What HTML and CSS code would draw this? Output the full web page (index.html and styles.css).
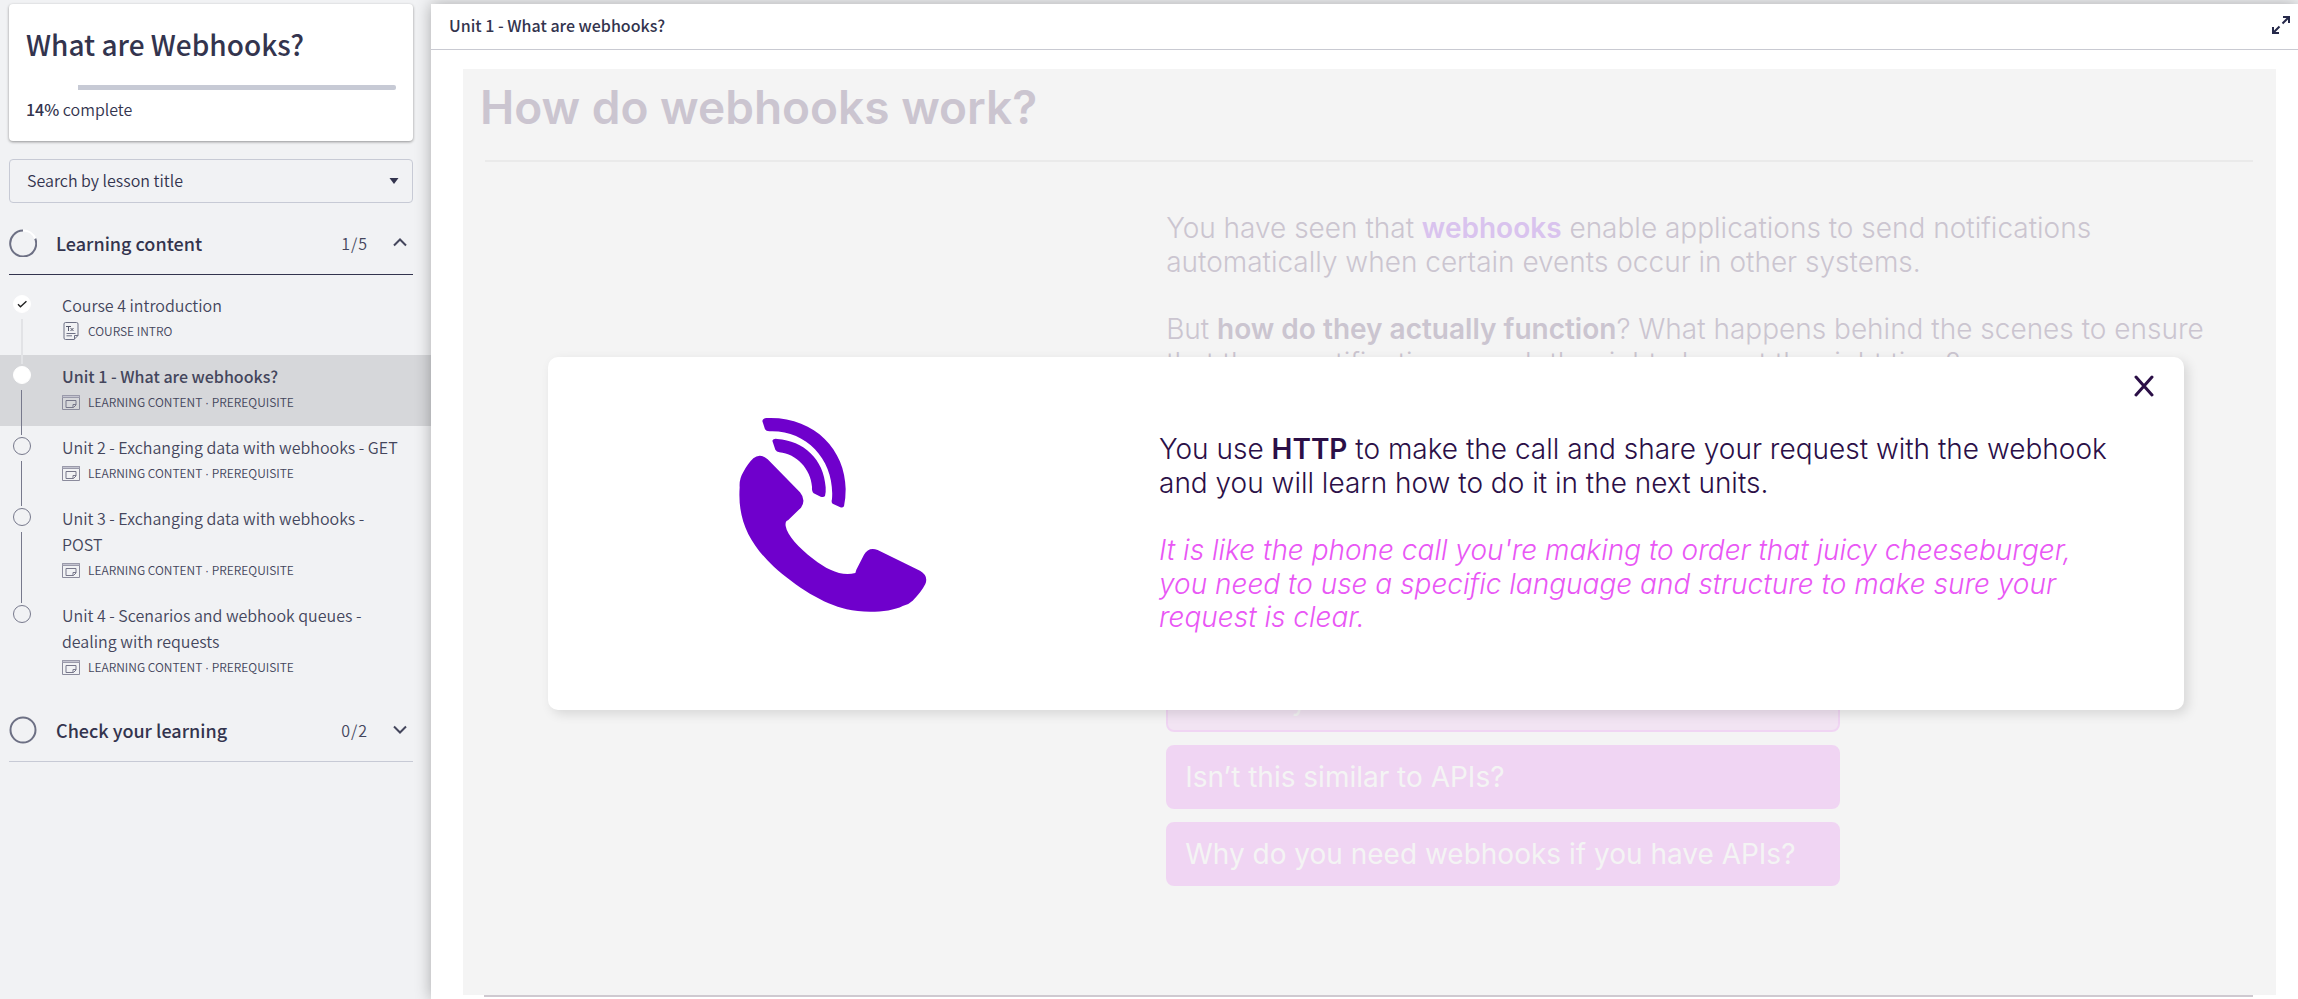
FILE: index.html
```html
<!DOCTYPE html>
<html lang="en">
<head>
<meta charset="utf-8">
<title>What are Webhooks?</title>
<link rel="stylesheet" href="styles.css">
</head>
<body>
<svg class="defs" aria-hidden="true">
  <symbol id="lesson" viewBox="0 0 18 15">
    <path d="M.5.5h17v14H.5z" fill="none" stroke="#8b8b9c"/>
    <path d="M.5.5h17v2H.5z" fill="#c4c4d0" stroke="#9a9aaa"/>
    <path d="M4 5.500h10v4.500l-2.500 2.500H4zM14 9.500h-3v3" fill="none" stroke="#77778a"/>
  </symbol>
  <symbol id="doc" viewBox="0 0 18 18">
    <path d="M3.500.500h11a1.500 1.500 0 0 1 1.500 1.500v11.500l-4 4H3.500A1.500 1.500 0 0 1 2 16V2A1.500 1.500 0 0 1 3.500.500zM16 13.500h-3.500v4M4.500 11.500h9M4.500 13.800h5.500" fill="none" stroke="#6d7084"/>
    <path d="M4 4.500h5M6.500 4.500v4.500M8.500 6l3 3M11.500 6l-3 3" fill="none" stroke="#55586c"/>
  </symbol>
</svg>

<aside class="sidebar">
  <section class="course">
    <h1>What are Webhooks?</h1>
    <div class="track"><div class="track-rest" style="width:86%"></div></div>
    <p class="percent"><b>14%</b> complete</p>
  </section>

  <div class="search">
    <select aria-label="Search by lesson title"><option>Search by lesson title</option></select>
    <svg width="10" height="6" viewBox="0 0 10 6" aria-hidden="true"><path d="M.5 0h9L5 6z" fill="#33344e"/></svg>
  </div>

  <section class="group">
    <button class="group-head open" type="button">
      <svg class="ring" viewBox="0 0 28 28" aria-hidden="true"><path d="M26.200 9.500A13 13 0 1 1 14 1.500" fill="none" stroke="#6d7084" stroke-width="2"/><path d="M14 1.500a13 13 0 0 1 12.200 8" fill="none" stroke="#fff" stroke-width="2"/></svg>
      <span class="group-name">Learning content</span>
      <span class="count">1/5</span>
      <svg class="chevron" viewBox="0 0 14 9" aria-hidden="true"><path d="M1 7.500l6-6 6 6"/></svg>
    </button>
    <ol class="lessons">
      <li class="lesson done">
        <span class="dot"><svg viewBox="0 0 18 18" aria-hidden="true"><path d="M4.500 9.200l2.800 2.800L14 6" fill="none" stroke="#222" stroke-width="1.600"/></svg></span>
        <a href="#intro">Course 4 introduction</a>
        <span class="meta"><svg width="18" height="18" aria-hidden="true"><use href="#doc"/></svg>COURSE INTRO</span>
      </li>
      <li class="lesson current">
        <span class="dot"></span>
        <a href="#unit1">Unit 1 - What are webhooks?</a>
        <span class="meta"><svg width="18" height="15" aria-hidden="true"><use href="#lesson"/></svg><span>LEARNING CONTENT <i>·</i> PREREQUISITE</span></span>
      </li>
      <li class="lesson">
        <span class="dot"></span>
        <a href="#unit2">Unit 2 - Exchanging data with webhooks - GET</a>
        <span class="meta"><svg width="18" height="15" aria-hidden="true"><use href="#lesson"/></svg><span>LEARNING CONTENT <i>·</i> PREREQUISITE</span></span>
      </li>
      <li class="lesson">
        <span class="dot"></span>
        <a href="#unit3">Unit 3 - Exchanging data with webhooks - POST</a>
        <span class="meta"><svg width="18" height="15" aria-hidden="true"><use href="#lesson"/></svg><span>LEARNING CONTENT <i>·</i> PREREQUISITE</span></span>
      </li>
      <li class="lesson">
        <span class="dot"></span>
        <a href="#unit4">Unit 4 - Scenarios and webhook queues - dealing with requests</a>
        <span class="meta"><svg width="18" height="15" aria-hidden="true"><use href="#lesson"/></svg><span>LEARNING CONTENT <i>·</i> PREREQUISITE</span></span>
      </li>
    </ol>
  </section>

  <section class="group">
    <button class="group-head" type="button">
      <svg class="ring" viewBox="0 0 28 28" aria-hidden="true"><circle cx="14" cy="14" r="12.500" fill="none" stroke="#6d7084" stroke-width="2"/></svg>
      <span class="group-name">Check your learning</span>
      <span class="count">0/2</span>
      <svg class="chevron" viewBox="0 0 14 9" aria-hidden="true"><path d="M1 1.500l6 6 6-6"/></svg>
    </button>
  </section>
</aside>

<main class="main">
  <header class="bar">
    <h2>Unit 1 - What are webhooks?</h2>
    <button class="icon-button" type="button" aria-label="Full screen">
      <svg width="18" height="18" viewBox="0 0 18 18" aria-hidden="true"><path d="M10.500 7.500L17 1M11 1h6v6M7.500 10.500L1 17M1 11v6h6" fill="none" stroke="#26294a" stroke-width="2"/></svg>
    </button>
  </header>

  <div class="content">
    <article class="stage">
      <h1>How do webhooks work?</h1>
      <hr class="rule">
      <div class="copy">
        <p>You have seen that <b class="accent">webhooks</b> enable applications to send notifications automatically when certain events occur in other systems.</p>
        <p>But <b>how do they actually function</b>? What happens behind the scenes to ensure that these notifications reach the right place at the right time?</p>
        <div class="questions">
          <button class="visited" type="button">What is y</button>
          <button type="button">Isn’t this similar to APIs?</button>
          <button type="button">Why do you need webhooks if you have APIs?</button>
        </div>
      </div>

      <div class="dialog" role="dialog" aria-label="HTTP">
        <button class="close" type="button" aria-label="Close">
          <svg width="20" height="22" viewBox="0 0 20 22" aria-hidden="true"><path d="M2 2l16 18M18 2L2 20" stroke="#2b0f47" stroke-width="3" stroke-linecap="round"/></svg>
        </button>
        <div class="picture">
          <svg width="188" height="196" viewBox="117 79 564 588" role="img" aria-label="Phone call">
            <g fill="#6f00cc">
              <path d="M160 203Q180 186 203 206L300 305Q319 328 303 351L264 389Q255 391 257 406C262 435 295 470 340 505C382 538 425 558 466 547L469 537L492 492Q506 468 533 478L660 540Q686 555 676 580Q664 604 638 630Q626 642 608 646C570 666 490 668 440 656C370 640 290 590 220 527C150 460 112 390 119 290Q117 265 130 244Q144 218 160 203Z"/>
              <path d="M217 150Q220 143 232 145C310 150 372 205 377 290Q378 306 375 316Q371 321 362 318L341 308Q335 302 336 288C332 235 290 190 238 185Q230 184 226 177Z"/>
              <path d="M187 91Q188 83 200 82C340 76 436 175 437 295Q437 325 432 347Q428 352 421 350L398 339Q393 335 396 325C405 210 320 117 208 122Q198 122 195 116Z"/>
            </g>
          </svg>
        </div>
        <div class="message">
          <p>You use <b>HTTP</b> to make the call and share your request with the webhook and you will learn how to do it in the next units.</p>
          <p class="analogy">It is like the phone call you're making to order that juicy cheeseburger, you need to use a specific language and structure to make sure your request is clear.</p>
        </div>
      </div>
    </article>
    <hr class="end">
  </div>
</main>
</body>
</html>
```
FILE: styles.css
```css
* { box-sizing: border-box; }

body {
  margin: 0;
  min-height: 100vh;
  display: flex;
  background: #f1f2f4;
  color: #33344e;
  font-family: "Noto Sans CJK SC", "Open Sans", sans-serif;
  font-size: 16px;
}

h1, h2, p, ol { margin: 0; padding: 0; }
button { font: inherit; color: inherit; cursor: pointer; }
.defs { position: absolute; width: 0; height: 0; }

/* Sidebar */
.sidebar { flex: none; width: 431px; padding-top: 4px; }

.course {
  margin: 0 18px 18px 9px;
  padding: 17px 17px 19px 17px;
  background: #fff;
  border-radius: 4px;
  box-shadow: 0 1px 3px rgba(0, 0, 0, .4);
}
.course h1 { font-size: 28px; line-height: 46px; font-weight: 500; }
.track { display: flex; justify-content: flex-end; margin-top: 18px; }
.track-rest { height: 5px; background: #c7cad5; border-radius: 0 2px 2px 0; }
.percent { margin-top: 7px; line-height: 25px; font-weight: 350; }
.percent b { font-weight: 500; }

.search { position: relative; margin: 0 18px 16px 9px; }
.search select {
  display: block;
  width: 100%;
  height: 44px;
  padding: 0 17px 3px;
  appearance: none;
  background: transparent;
  border: 1px solid #c7cad5;
  border-radius: 4px;
  font: inherit;
  font-weight: 350;
  color: #33344e;
}
.search svg { position: absolute; right: 14px; top: 19px; }

.group-head {
  display: flex;
  align-items: center;
  width: calc(100% - 27px);
  height: 56px;
  margin: 0 18px 0 9px;
  padding: 0 6px 8px 0;
  background: none;
  border: 0;
  border-bottom: 1px solid #c7cad5;
}
.group-head.open { border-bottom-color: #33344e; }
.ring { width: 28px; height: 28px; margin-right: 19px; }
.group-name { flex: 1; text-align: left; font-size: 18px; font-weight: 500; }
.count { color: #44465c; font-weight: 350; letter-spacing: 1px; margin-right: 25px; }
.chevron { width: 14px; height: 9px; fill: none; stroke: #44465c; stroke-width: 2; }

.lessons { list-style: none; padding: 9px 0 15px; }
.lesson { position: relative; padding: 8px 26px 14px 62px; }
.lesson a { display: block; color: #44465c; font-weight: 350; text-decoration: none; line-height: 26px; }
.lesson.current { background: #d6d7da; }
.lesson.current a { font-weight: 500; }
.meta { display: flex; align-items: center; gap: 8px; height: 23px; padding-top: 3px; font-size: 12px; line-height: 20px; font-weight: 350; color: #44465c; }
.meta i { font-family: "Liberation Sans", sans-serif; font-style: normal; }

.dot {
  position: absolute;
  left: 13px;
  top: 11px;
  width: 18px;
  height: 18px;
  border: 1px solid #77798c;
  border-radius: 50%;
}
.dot svg { display: block; width: 16px; height: 16px; }
.done .dot, .current .dot { background: #fff; border-color: #fff; }
.lesson:not(:last-child)::after {
  content: "";
  position: absolute;
  left: 21px;
  top: 35px;
  bottom: -9px;
  width: 1px;
  background: #77798c;
  z-index: 1;
}
.lesson.done::after { background: #e2e3e6; width: 2px; }

/* Main column */
.main {
  position: relative;
  flex: 1;
  min-width: 0;
  display: flex;
  flex-direction: column;
  margin-top: 4px;
  background: #fff;
  box-shadow: 0 0 15px rgba(0, 0, 0, .3);
}
.bar {
  display: flex;
  align-items: center;
  justify-content: space-between;
  height: 46px;
  padding: 0 8px 4px 18px;
  border-bottom: 1px solid #c9cad2;
}
.bar h2 { font-size: 16px; font-weight: 500; }
.icon-button { padding: 0; border: 0; background: none; display: flex; }

.content { flex: 1; display: flex; flex-direction: column; padding: 19px 22px 2px 32px; }
.stage {
  position: relative;
  flex: 1;
  padding: 11px 23px 100px 17px;
  background: #f4f4f4;
  color: #cbc5d0;
  font-family: Inter, "Open Sans", sans-serif;
  font-size: 28px;
  line-height: 1.2;
  font-weight: 300;
}
.stage h1 { font-size: 46px; line-height: 54px; font-weight: 600; }
.rule { height: 2px; margin: 26px 0 50px 5px; border: 0; background: #eaeaea; }
.stage b { font-weight: 600; }
.copy { margin-left: 38.7%; max-width: 1060px; }
.copy p { margin-bottom: 34px; }
.accent { color: #d9c3ee; }

.questions { display: flex; flex-direction: column; gap: 13px; width: 674px; margin-top: 288px; }
.questions button {
  height: 64px;
  padding: 0 17px;
  border: 2px solid #f0d5f3;
  border-radius: 8px;
  background: #f0d5f3;
  color: #f4f4f4;
  text-align: left;
  font-weight: 400;
}
.questions .visited { background: #f2e4f3; }

.dialog {
  position: absolute;
  left: 85px;
  right: 92px;
  top: 288px;
  display: grid;
  grid-template-columns: 570px 1fr;
  min-height: 353px;
  background: #fff;
  border-radius: 10px;
  box-shadow: 4px 4px 12px rgba(0, 0, 0, .12);
  color: #2b0f47;
}
.picture { display: flex; justify-content: center; padding-top: 60px; }
.message { padding: 76px 0 24px 41px; max-width: 1000px; }
.message p { margin-bottom: 34px; }
.message .analogy { color: #e957f5; font-style: italic; }
.close { position: absolute; right: 30px; top: 18px; padding: 0; border: 0; background: none; display: flex; }

.end { width: 1769px; max-width: 100%; height: 2px; margin: 0 0 0 21px; border: 0; background: #cfc9d0; }
```
